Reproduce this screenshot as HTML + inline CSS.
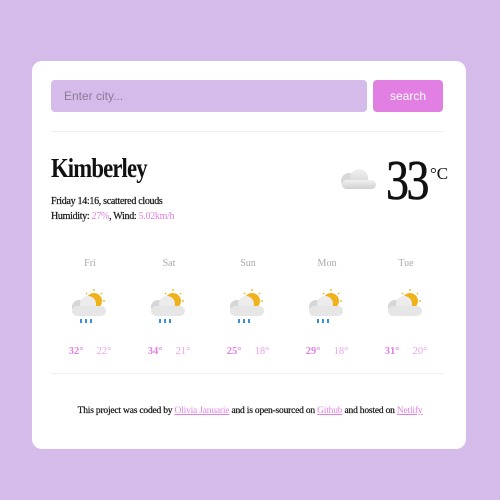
<!DOCTYPE html><html><head><style>
body{margin:0;width:500px;height:500px;background:#d5bbea;font-family:"Liberation Serif",serif;position:relative;overflow:hidden;color:#111}
.card{position:absolute;left:32px;top:61px;width:434px;height:388px;background:#fff;border-radius:10px}
.inp{position:absolute;left:51px;top:80px;width:316px;height:32px;background:#d5bbea;border-radius:4px;font-family:"Liberation Sans",sans-serif;font-size:12px;color:#8a7a99;line-height:32px;padding-left:13px;box-sizing:border-box}
.btn{position:absolute;left:373px;top:80px;width:70px;height:32px;background:#e17fe3;border-radius:4px;color:#fff;font-family:"Liberation Sans",sans-serif;font-size:12px;text-align:center;line-height:32px}
.hr{position:absolute;left:51px;width:392px;height:1px;background:#f0eef2}
.t{position:absolute;white-space:nowrap}
.p{color:#e17fe3}
.col{position:absolute;top:258px;width:80px;text-align:center}
.tp{font-size:10.5px;margin-top:16px}
.tp b{color:#e17fe3}
.tp span{color:#e9a2ea}
</style></head><body>
<div class="card"></div>
<div class="inp">Enter city...</div>
<div class="btn">search</div>
<div class="hr" style="top:131px"></div>
<div class="t" style="left:51px;top:153px;font-size:27px;font-weight:bold;letter-spacing:-1px;transform:scaleX(.84);transform-origin:left">Kimberley</div>
<div class="t" style="left:51px;top:196px;font-size:10px;letter-spacing:-.3px;-webkit-text-stroke:.2px #111">Friday 14:16, scattered clouds</div>
<div class="t" style="left:51px;top:211px;font-size:10px;letter-spacing:-.3px;-webkit-text-stroke:.2px #111">Humidity: <span class="p" style="-webkit-text-stroke:0">27%</span>, Wind: <span class="p" style="-webkit-text-stroke:0">5.02km/h</span></div>
<svg style="position:absolute;left:338px;top:168px" width="40" height="26"><defs><linearGradient id="g" x1="0" y1="0" x2="0" y2="1"><stop offset="0" stop-color="#f2f2f2"/><stop offset="1" stop-color="#cfcfcf"/></linearGradient></defs><circle cx="11" cy="13" r="8" fill="#d8d8d8"/><circle cx="21" cy="10" r="9" fill="url(#g)"/><rect x="4" y="12" width="34" height="9" rx="4.5" fill="url(#g)"/></svg>
<div class="t" style="left:386px;top:149px;font-size:56px;letter-spacing:-3px;transform:scaleX(.82);transform-origin:left;-webkit-text-stroke:.6px #111">33</div>
<div class="t" style="left:430px;top:164px;font-size:17px">°C</div>
<svg width="0" height="0" style="position:absolute"><defs><g id="ic"><circle cx="24" cy="12" r="8" fill="#f0b21c"/><g stroke="#f0b21c" stroke-width="1.3"><line x1="24" y1="0" x2="24" y2="2"/><line x1="32" y1="4" x2="31" y2="5"/><line x1="35" y1="12" x2="33" y2="12"/><line x1="16" y1="4" x2="17" y2="5"/></g><circle cx="9" cy="18" r="7" fill="#d6d6d6"/><circle cx="18" cy="15" r="8" fill="#ececec"/><rect x="2" y="17" width="34" height="10" rx="5" fill="#e6e6e6"/></g><g id="dr" fill="#3a8fd8"><rect x="10" y="30" width="2" height="4"/><rect x="15" y="30" width="2" height="4"/><rect x="20" y="30" width="2" height="4"/></g></defs></svg>
<div class="col" style="left:50px"><div style="font-size:10px;color:#aaa">Fri</div><svg width="40" height="36" style="margin-top:20px"><use href="#ic"/><use href="#dr"/></svg><div class="tp"><b>32°</b>&nbsp;&nbsp;&nbsp;&nbsp;&nbsp;<span>22°</span></div></div>
<div class="col" style="left:129px"><div style="font-size:10px;color:#aaa">Sat</div><svg width="40" height="36" style="margin-top:20px"><use href="#ic"/><use href="#dr"/></svg><div class="tp"><b>34°</b>&nbsp;&nbsp;&nbsp;&nbsp;&nbsp;<span>21°</span></div></div>
<div class="col" style="left:208px"><div style="font-size:10px;color:#aaa">Sun</div><svg width="40" height="36" style="margin-top:20px"><use href="#ic"/><use href="#dr"/></svg><div class="tp"><b>25°</b>&nbsp;&nbsp;&nbsp;&nbsp;&nbsp;<span>18°</span></div></div>
<div class="col" style="left:287px"><div style="font-size:10px;color:#aaa">Mon</div><svg width="40" height="36" style="margin-top:20px"><use href="#ic"/><use href="#dr"/></svg><div class="tp"><b>29°</b>&nbsp;&nbsp;&nbsp;&nbsp;&nbsp;<span>18°</span></div></div>
<div class="col" style="left:366px"><div style="font-size:10px;color:#aaa">Tue</div><svg width="40" height="36" style="margin-top:20px"><use href="#ic"/></svg><div class="tp"><b>31°</b>&nbsp;&nbsp;&nbsp;&nbsp;&nbsp;<span>20°</span></div></div>
<div class="hr" style="top:373px"></div>
<div class="t" style="left:0;width:500px;text-align:center;top:406px;font-size:9.5px;letter-spacing:-.2px;-webkit-text-stroke:.2px #111">This project was coded by <u class="p" style="-webkit-text-stroke:0">Olivia Januarie</u> and is open-sourced on <u class="p" style="-webkit-text-stroke:0">Github</u> and hosted on <u class="p" style="-webkit-text-stroke:0">Netlify</u></div>
</body></html>
